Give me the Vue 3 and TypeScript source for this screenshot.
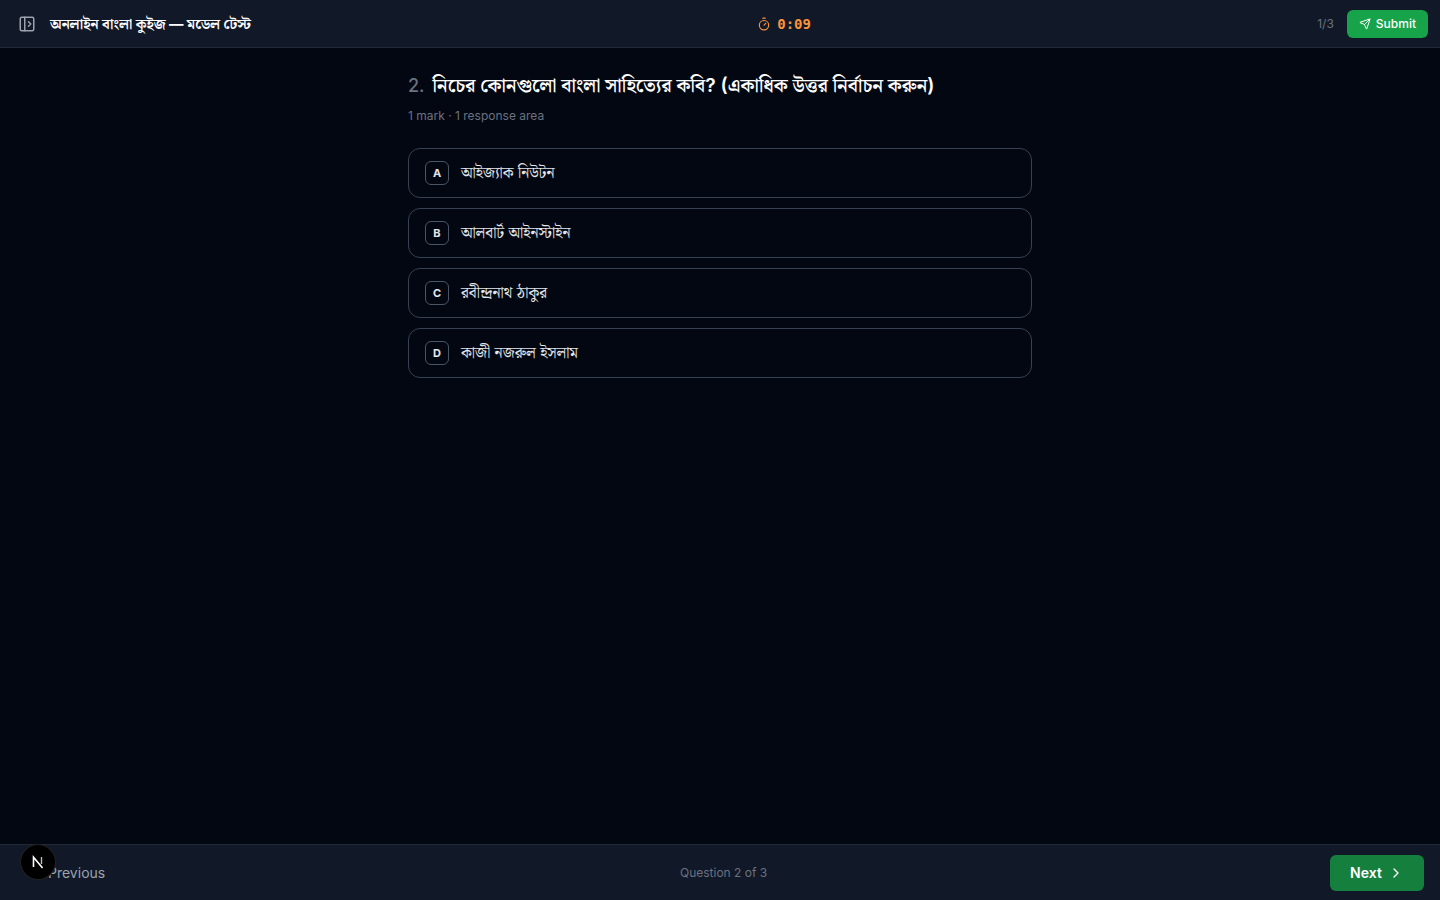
<script setup lang="ts">
const options = [
  { key: 'A', label: 'আইজ্যাক নিউটন' },
  { key: 'B', label: 'আলবার্ট আইনস্টাইন' },
  { key: 'C', label: 'রবীন্দ্রনাথ ঠাকুর' },
  { key: 'D', label: 'কাজী নজরুল ইসলাম' },
]
</script>

<template>
  <div class="page">
    <header class="topbar">
      <div class="top-left">
        <button class="icon-btn" aria-label="Toggle sidebar">
          <svg width="18" height="18" viewBox="0 0 24 24" fill="none" stroke="currentColor" stroke-width="2" stroke-linecap="round" stroke-linejoin="round">
            <rect x="3" y="3" width="18" height="18" rx="2" />
            <path d="M9 3v18" />
            <path d="m14 9 3 3-3 3" />
          </svg>
        </button>
        <h1 class="quiz-title">অনলাইন বাংলা কুইজ — মডেল টেস্ট</h1>
      </div>
      <div class="timer">
        <svg width="14" height="14" viewBox="0 0 24 24" fill="none" stroke="currentColor" stroke-width="2" stroke-linecap="round" stroke-linejoin="round">
          <line x1="10" x2="14" y1="2" y2="2" />
          <line x1="12" x2="15" y1="14" y2="11" />
          <circle cx="12" cy="14" r="8" />
        </svg>
        <span>0:09</span>
      </div>
      <div class="top-right">
        <span class="progress">1/3</span>
        <button class="submit">
          <svg width="14" height="14" viewBox="0 0 24 24" fill="none" stroke="currentColor" stroke-width="2" stroke-linecap="round" stroke-linejoin="round">
            <path d="M14.536 21.686a.5.5 0 0 0 .937-.024l6.5-19a.496.496 0 0 0-.635-.635l-19 6.5a.5.5 0 0 0-.024.937l7.93 3.18a2 2 0 0 1 1.112 1.11z" />
            <path d="m21.854 2.147-10.94 10.939" />
          </svg>
          Submit
        </button>
      </div>
    </header>

    <main class="content">
      <div class="question">
        <h2 class="q-title"><span class="q-num">2.</span>নিচের কোনগুলো বাংলা সাহিত্যের কবি? (একাধিক উত্তর নির্বাচন করুন)</h2>
        <p class="q-meta">1 mark · 1 response area</p>
        <div class="options">
          <button v-for="o in options" :key="o.key" class="option">
            <span class="badge">{{ o.key }}</span>
            <span class="opt-label">{{ o.label }}</span>
          </button>
        </div>
      </div>
    </main>

    <footer class="bottombar">
      <button class="prev">
        <svg width="16" height="16" viewBox="0 0 24 24" fill="none" stroke="currentColor" stroke-width="2" stroke-linecap="round" stroke-linejoin="round">
          <path d="m15 18-6-6 6-6" />
        </svg>
        Previous
      </button>
      <span class="counter">Question 2 of 3</span>
      <button class="next">
        Next
        <svg width="16" height="16" viewBox="0 0 24 24" fill="none" stroke="currentColor" stroke-width="2" stroke-linecap="round" stroke-linejoin="round">
          <path d="m9 18 6-6-6-6" />
        </svg>
      </button>
    </footer>

    <div class="dev-indicator">
      <svg width="16" height="16" viewBox="0 0 16 16" fill="none">
        <path d="M3.5 13V3.2L12.6 14" stroke="#fff" stroke-width="1.6" />
        <path d="M11.5 3v7" stroke="#bbb" stroke-width="1.4" />
      </svg>
    </div>
  </div>
</template>

<style>
html, body { background: #030712; }
</style>

<style scoped>
.page {
  height: 900px;
  display: flex;
  flex-direction: column;
  background: #030712;
  color: #f3f4f6;
  font-family: Inter, "Noto Serif Bengali", sans-serif;
  overflow: hidden;
  position: relative;
}
button {
  font-family: inherit;
  border: none;
  background: none;
  cursor: pointer;
  padding: 0;
}
.topbar {
  height: 48px;
  box-sizing: border-box;
  flex: none;
  display: flex;
  align-items: center;
  justify-content: space-between;
  padding: 0 12px 0 18px;
  background: #111827;
  border-bottom: 1px solid #1f2937;
}
.top-left { display: flex; align-items: center; gap: 14px; }
.icon-btn { color: #9ca3af; display: flex; }
.quiz-title { margin: 0; font-size: 14.4px; font-weight: 700; color: #fff; line-height: 20px; }
.timer {
  display: flex;
  align-items: center;
  gap: 6px;
  color: #fb923c;
  font-family: "DejaVu Sans Mono", monospace;
  font-size: 14px;
  font-weight: 700;
}
.top-right { display: flex; align-items: center; gap: 13px; justify-content: flex-end; }
.progress { font-size: 12px; color: #6b7280; }
.submit {
  height: 28px;
  padding: 0 12px;
  border-radius: 6px;
  background: #16a34a;
  color: #fff;
  font-size: 12px;
  font-weight: 500;
  display: flex;
  align-items: center;
  gap: 5px;
}
.submit svg { width: 12px; height: 12px; }
.content { flex: 1; display: flex; justify-content: center; padding-top: 24px; }
.question { width: 624px; }
.q-title {
  margin: 0;
  height: 28px;
  font-size: 19.2px;
  font-weight: 600;
  line-height: 26px;
  color: #fff;
}
.q-num { color: #6b7280; margin-right: 8px; font-size: 18px; font-weight: 500; }
.q-meta { margin: 8px 0 0; font-size: 12px; line-height: 16px; color: #6b7280; }
.options { margin-top: 24px; display: flex; flex-direction: column; gap: 10px; }
.option {
  height: 50px;
  box-sizing: border-box;
  display: flex;
  align-items: center;
  gap: 12px;
  padding: 0 16px;
  border: 1px solid #374151;
  border-radius: 12px;
  text-align: left;
  color: #e5e7eb;
}
.badge {
  width: 24px;
  height: 24px;
  box-sizing: border-box;
  flex: none;
  display: flex;
  align-items: center;
  justify-content: center;
  border: 1px solid #4b5563;
  border-radius: 6px;
  font-size: 11px;
  font-weight: 700;
  color: #e5e7eb;
}
.opt-label { font-size: 15.4px; line-height: 20px; }
.bottombar {
  height: 56px;
  box-sizing: border-box;
  flex: none;
  display: flex;
  align-items: center;
  justify-content: space-between;
  padding: 0 16px 0 28px;
  background: #111827;
  border-top: 1px solid #1f2937;
}
.prev {
  display: flex;
  align-items: center;
  gap: 4px;
  font-size: 14px;
  font-weight: 400;
  color: #9ca3af;
}
.counter { font-size: 12px; color: #6b7280; margin-left: 12px; }
.next {
  width: 94px;
  height: 36px;
  border-radius: 6px;
  background: #15803d;
  color: #fff;
  font-size: 14px;
  font-weight: 600;
  display: flex;
  align-items: center;
  justify-content: center;
  gap: 6px;
}
.dev-indicator {
  position: absolute;
  left: 21px;
  top: 845px;
  width: 34px;
  height: 34px;
  border-radius: 50%;
  background: #000;
  box-shadow: 0 0 0 1px #222;
  display: flex;
  align-items: center;
  justify-content: center;
}
</style>
